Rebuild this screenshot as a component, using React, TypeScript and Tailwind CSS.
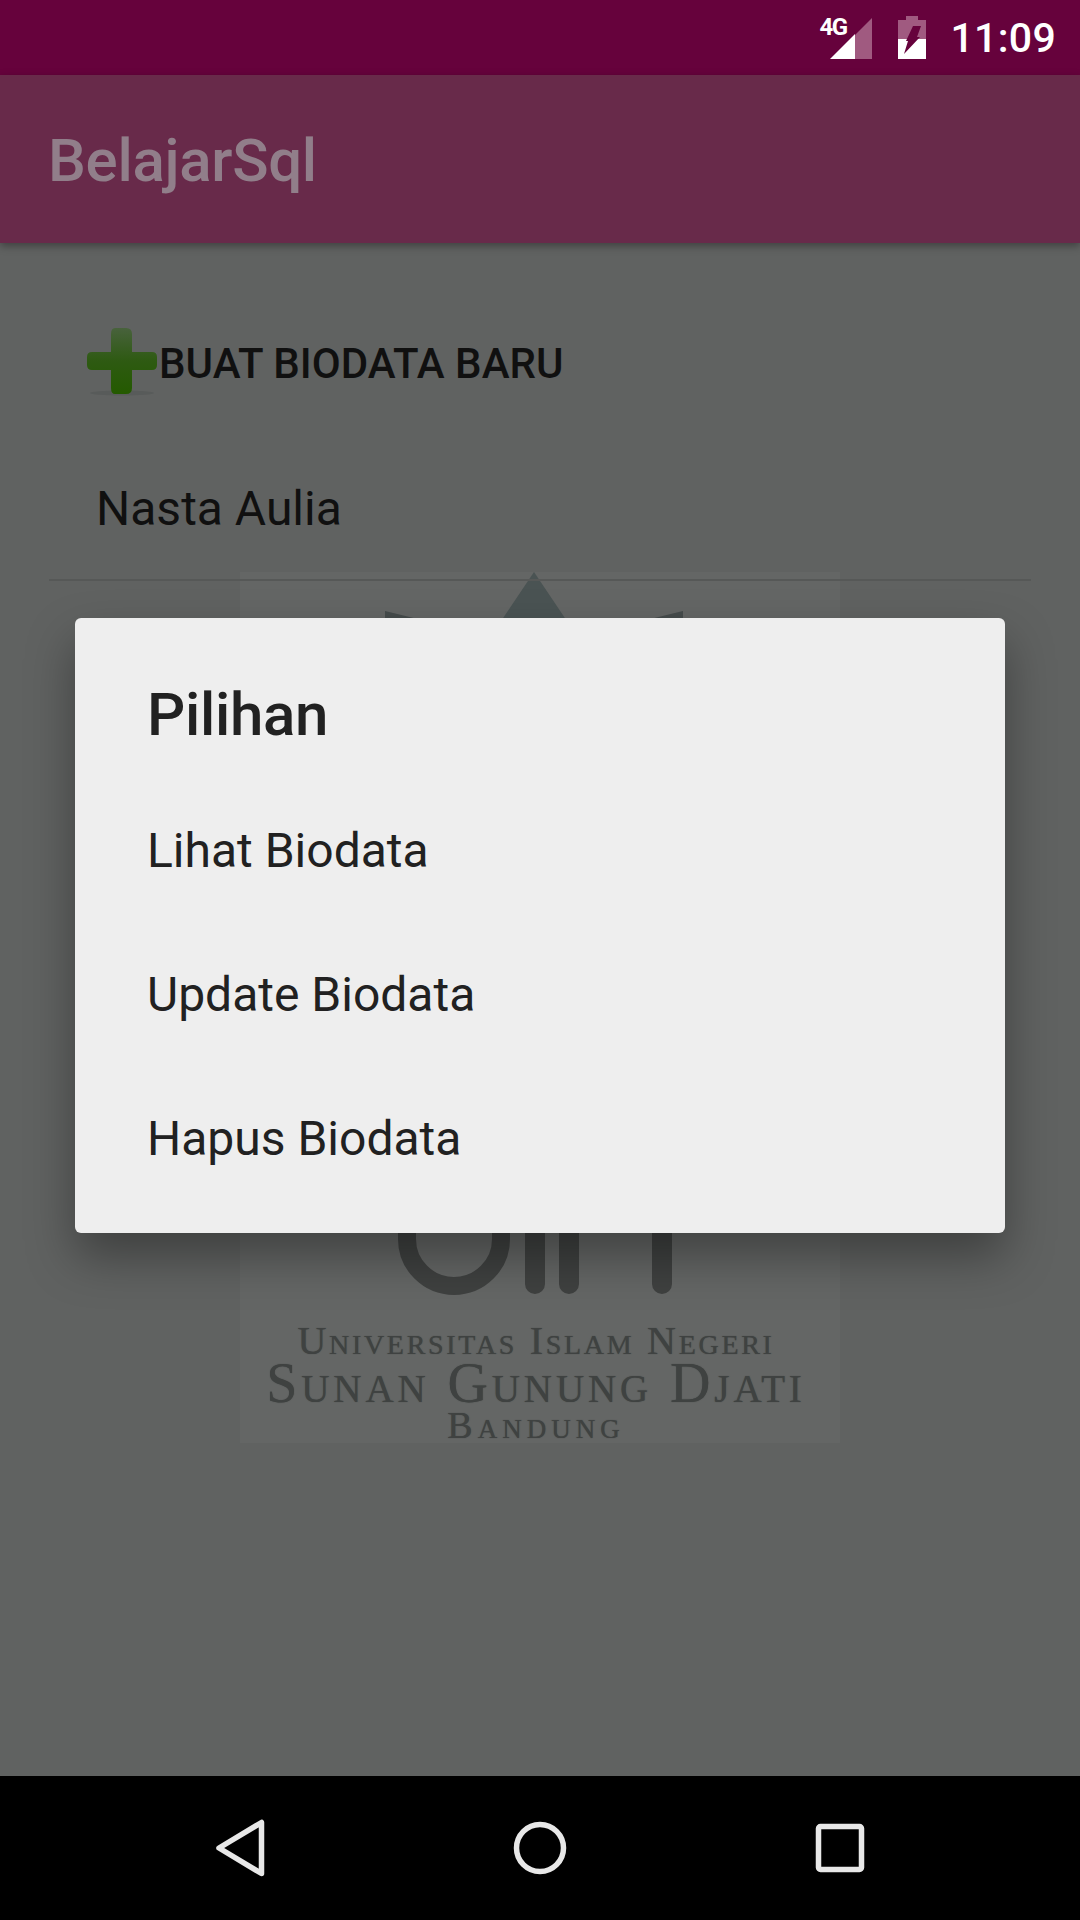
export default function App() {
  const roboto = "font-['Roboto',sans-serif]";
  return (
    <div className={`relative flex h-[1920px] w-[1080px] flex-col overflow-hidden bg-[#606261] ${roboto}`}>
      {/* status bar */}
      <div className="flex h-[75px] shrink-0 items-center justify-end bg-[#66023c] pr-[24px]">
        <div className="relative mr-[25px] mt-[1px] h-[45px] w-[54px]">
          <span className="absolute left-0 top-[-1px] text-[24px] font-bold leading-[24px] tracking-[-1.6px] text-white">4G</span>
          <svg viewBox="0 0 54 45" className="absolute inset-0 h-[45px] w-[54px]">
            <path d="M36 43V19L53 2V43Z" fill="#a05a80" />
            <path d="M11 43L36 18V43Z" fill="#ffffff" />
          </svg>
        </div>
        <svg viewBox="0 0 28 44" className="mr-[24px] h-[44px] w-[28px]">
          <path d="M8 0H20V4H28V43H0V4H8Z" fill="#a05a80" />
          <path d="M0 23H28V43H0Z" fill="#ffffff" />
          <path d="M15 10H23L19 21H22L6 38L10 25H8Z" fill="#66023c" />
        </svg>
        <span className="pt-[2px] text-[41px] font-medium leading-none tracking-[0.3px] text-white">11:09</span>
      </div>

      {/* app bar */}
      <div className="z-10 flex h-[168px] shrink-0 items-center bg-[#682a4a] pl-[48px] pt-[3px] shadow-[0_3px_8px_rgba(0,0,0,0.35)]">
        <span className="text-[60px] font-medium leading-none tracking-[-0.3px] text-[#917e8a]">BelajarSql</span>
      </div>

      {/* content */}
      <div className="relative flex flex-1 flex-col">
        {/* watermark logo */}
        <div className="absolute left-[240px] top-[329px] h-[871px] w-[600px] bg-[#646665]">
          <svg viewBox="0 0 600 871" className="absolute inset-0 h-full w-full">
            <path d="M294 0L341 70H247Z" fill="#4a5353" />
            <path d="M145 39L190 50V70H145Z" fill="#454b4b" />
            <path d="M443 39L398 50V70H443Z" fill="#454b4b" />
            <path d="M167 650V667A46 46 0 0 0 261 667V650" fill="none" stroke="#3f4140" strokeWidth="18" />
            <path d="M295 650V712M329 650V712M422 650V712" fill="none" stroke="#3f4140" strokeWidth="20" strokeLinecap="round" />
          </svg>
          <div className="absolute inset-x-0 top-[750px] flex flex-col items-center pr-[8px] font-['Liberation_Serif',serif] leading-none text-[#3f4241] [font-variant:small-caps] [text-shadow:0_0_1px_#3f4241]">
            <span className="h-[38px] text-[40px] leading-[38px] tracking-[2.7px]">Universitas Islam Negeri</span>
            <span className="h-[46px] text-[56px] leading-[46px] tracking-[3.9px]">Sunan Gunung Djati</span>
            <span className="mt-[5px] h-[28px] text-[38px] leading-[28px] tracking-[5px]">Bandung</span>
          </div>
        </div>

        <div className="relative flex h-[198px] shrink-0 items-center pl-[87px] pt-[44px]">
          <svg viewBox="0 0 70 68" className="mb-[4px] h-[68px] w-[70px] shrink-0">
            <defs>
              <linearGradient id="g" x1="0" y1="0" x2="0" y2="1">
                <stop offset="0" stopColor="#48623c" />
                <stop offset="0.5" stopColor="#2e5a12" />
                <stop offset="1" stopColor="#245a00" />
              </linearGradient>
            </defs>
            <ellipse cx="35" cy="65" rx="32" ry="2.5" fill="#585b5a" />
            <path
              d="M28 0H39Q45 0 45 6V24H65Q70 24 70 29V37Q70 42 65 42H45V60Q45 66 39 66H28Q24 66 24 60V42H5Q0 42 0 37V29Q0 24 5 24H24V6Q24 0 28 0Z"
              fill="url(#g)"
            />
          </svg>
          <span className="ml-[2px] text-[42px] font-medium leading-none tracking-[0.05px] text-[#101010]">BUAT BIODATA BARU</span>
        </div>
        <div className="relative mx-[49px] flex h-[140px] shrink-0 items-center border-b-[2px] border-[#565857] pb-[3px] pl-[47px]">
          <span className="text-[48px] leading-none text-[#101010]">Nasta Aulia</span>
        </div>

        {/* dialog */}
        <div className="absolute left-[75px] top-[375px] flex h-[615px] w-[930px] flex-col rounded-[6px] bg-[#eeeeee] pl-[72px] text-[#212121] shadow-[0_24px_48px_rgba(0,0,0,0.35)]">
          <div className="flex h-[160px] shrink-0 items-center pt-[34px] text-[60px] font-medium leading-none tracking-[-0.3px]">Pilihan</div>
          <div className="flex h-[144px] shrink-0 items-center pt-[2px] text-[48px] leading-none">Lihat Biodata</div>
          <div className="flex h-[144px] shrink-0 items-center pt-[2px] text-[48px] leading-none">Update Biodata</div>
          <div className="flex h-[144px] shrink-0 items-center pt-[2px] text-[48px] leading-none">Hapus Biodata</div>
        </div>
      </div>

      {/* nav bar */}
      <div className="z-10 flex h-[144px] shrink-0 items-center bg-black">
        <svg viewBox="0 0 1080 144" className="h-[144px] w-[1080px]">
          <path d="M261.5 46.5V97.5L219 72Z" fill="none" stroke="#e8e8e8" strokeWidth="5.5" strokeLinejoin="round" />
          <circle cx="540" cy="72" r="23.5" fill="none" stroke="#e8e8e8" strokeWidth="5.5" />
          <rect x="818.5" y="50.5" width="43" height="43" rx="2" fill="none" stroke="#e8e8e8" strokeWidth="5.5" />
        </svg>
      </div>
    </div>
  );
}
